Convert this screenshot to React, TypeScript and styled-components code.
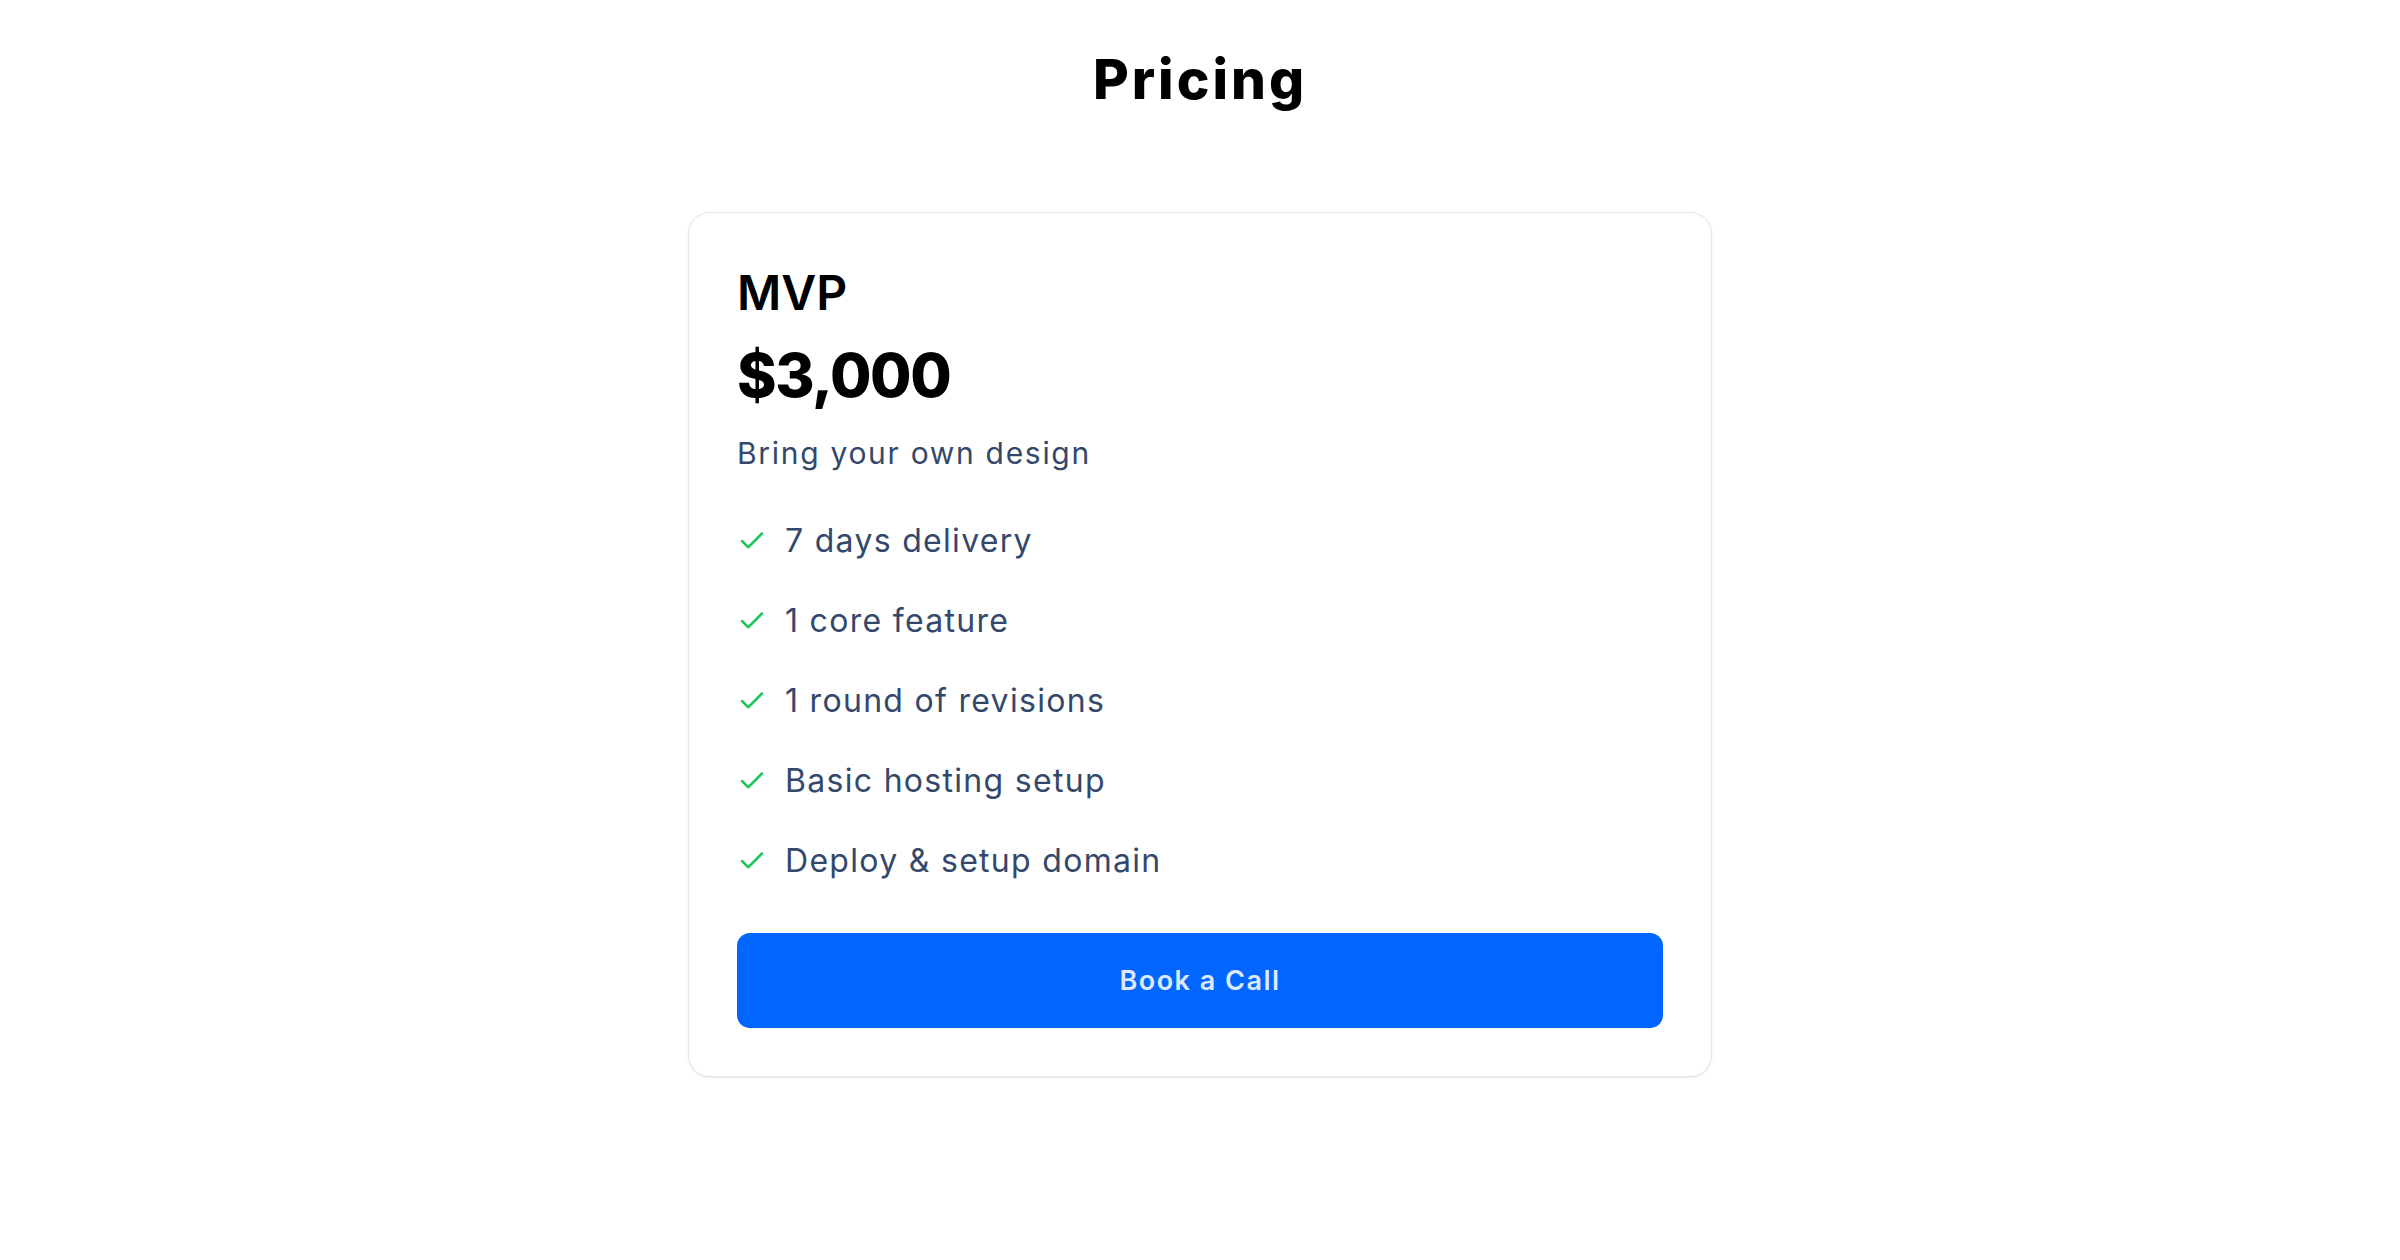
import * as React from "react";
import styled, { createGlobalStyle } from "styled-components";
import { Check } from "lucide-react";

const GlobalStyle = createGlobalStyle`
  html, body {
    margin: 0;
    padding: 0;
    background: #ffffff;
  }

  body {
    font-family: "Inter", "Noto Sans", "Liberation Sans", sans-serif;
    -webkit-font-smoothing: antialiased;
  }

  *, *::before, *::after {
    box-sizing: border-box;
  }
`;

const Page = styled.main`
  display: flex;
  flex-direction: column;
  align-items: center;
  padding: 46px 24px 80px;
`;

const Heading = styled.h1`
  margin: 0;
  font-size: 55px;
  line-height: 66px;
  font-weight: 800;
  letter-spacing: 3px;
  color: #000000;
`;

const Card = styled.section`
  width: 100%;
  max-width: 1024px;
  margin-top: 100px;
  padding: 48px;
  border: 1px solid #e5e7eb;
  border-radius: 22px;
  background: #ffffff;
  box-shadow: 0 1px 3px rgba(15, 23, 42, 0.06), 0 1px 2px rgba(15, 23, 42, 0.04);
  display: flex;
  flex-direction: column;
`;

const PlanName = styled.h2`
  margin: 0;
  font-size: 48px;
  line-height: 63px;
  font-weight: 600;
  color: #000000;
`;

const Price = styled.div`
  margin-top: 15px;
  font-size: 60px;
  line-height: 72px;
  font-weight: 800;
  letter-spacing: -1.4px;
  color: #000000;
`;

const Tagline = styled.p`
  margin: 20px 0 0;
  font-size: 30px;
  line-height: 45px;
  font-weight: 400;
  letter-spacing: 1.7px;
  color: #34486b;
`;

const FeatureList = styled.ul`
  list-style: none;
  margin: 41px 0 0;
  padding: 0;
  display: flex;
  flex-direction: column;
  gap: 32px;
`;

const FeatureRow = styled.li`
  display: flex;
  align-items: center;
  gap: 18px;
  height: 48px;
  font-size: 32px;
  line-height: 48px;
  letter-spacing: 1.3px;
  color: #34486b;

  svg {
    flex: none;
    color: #22c55e;
  }
`;

const BookButton = styled.button`
  margin-top: 48px;
  height: 95px;
  width: 100%;
  border: none;
  border-radius: 13px;
  background: #0066ff;
  color: #dde9ff;
  font-family: inherit;
  font-size: 27px;
  font-weight: 600;
  letter-spacing: 1.5px;
  cursor: pointer;
  display: flex;
  align-items: center;
  justify-content: center;
`;

const features = [
  "7 days delivery",
  "1 core feature",
  "1 round of revisions",
  "Basic hosting setup",
  "Deploy & setup domain",
];

export default function App() {
  return (
    <>
      <GlobalStyle />
      <Page>
        <Heading>Pricing</Heading>
        <Card>
          <PlanName>MVP</PlanName>
          <Price>$3,000</Price>
          <Tagline>Bring your own design</Tagline>
          <FeatureList>
            {features.map((f) => (
              <FeatureRow key={f}>
                <Check size={30} strokeWidth={2} />
                <span>{f}</span>
              </FeatureRow>
            ))}
          </FeatureList>
          <BookButton type="button">Book a Call</BookButton>
        </Card>
      </Page>
    </>
  );
}
